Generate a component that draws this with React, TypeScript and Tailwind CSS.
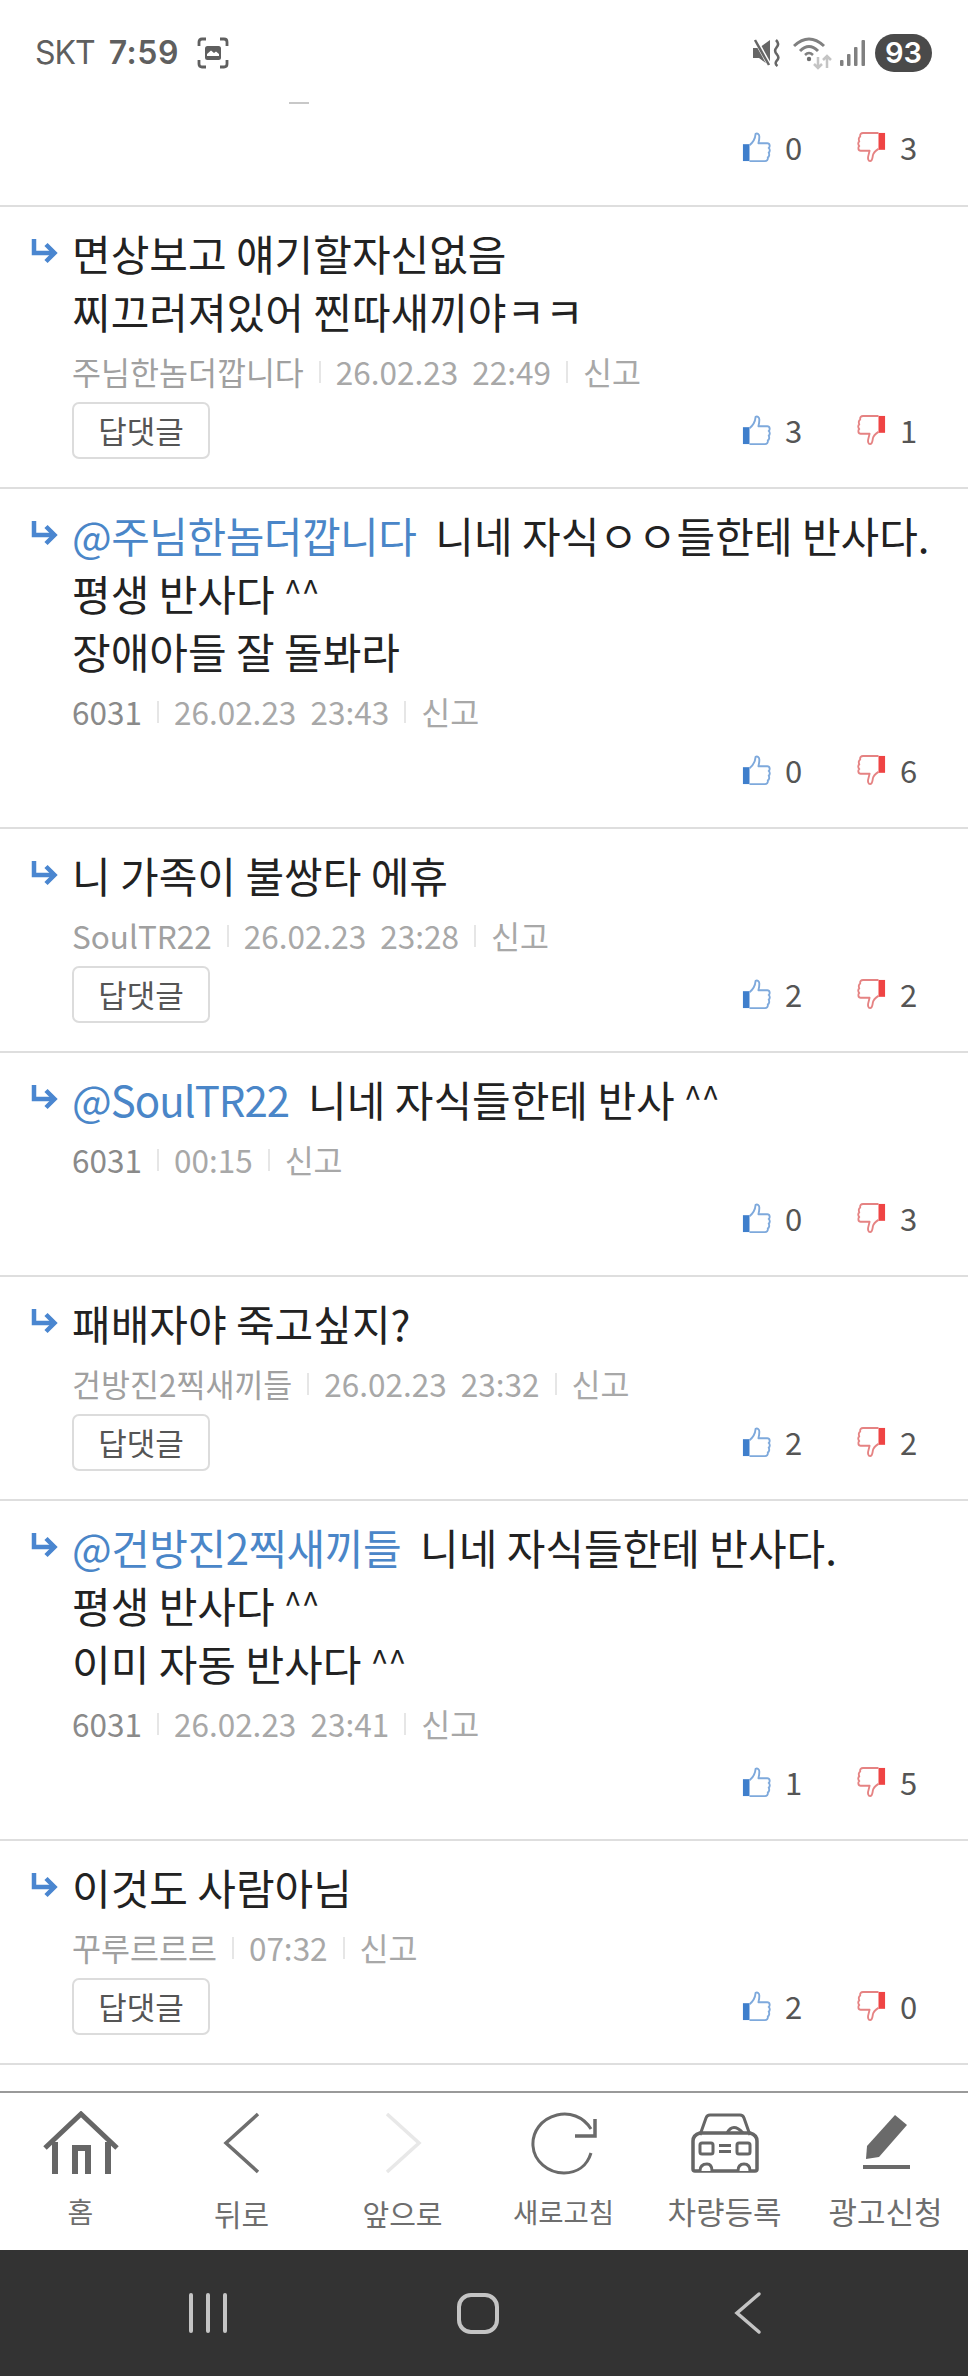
import React from "react";

const Up = () => (
  <svg width="30" height="30" viewBox="0 0 32 32" className="block">
    <rect x="1" y="13" width="7" height="18" fill="#3f7fcc" />
    <path d="M8 14 C12 11 14 8 14.500 2 C16.500 1 18.500 2.500 18.500 5 C18.500 8 18 10 17.500 12 L27 12 C30 12 30 16 28.500 17 C30 18.500 30 21 28.500 22 C29.500 24 29 26.500 27.500 27 C28 29.500 26.500 31 24.500 31 L8 31" fill="none" stroke="#7ea9dc" strokeWidth="2" strokeLinejoin="round" />
  </svg>
);

const Down = () => (
  <svg width="30" height="30" viewBox="0 0 32 32" className="block">
    <rect x="24" y="1" width="7" height="18" fill="#ef4444" />
    <path d="M24 18 C21 20 18.500 22 18 25 C17.500 28 17.500 31 15 31 C13 31 12.500 28 13 26 C13.500 24 14 22 14.500 20 L5 20 C2 20 2 16 3.500 15 C2 13.500 2 11 3.500 10 C2.500 8 3 5.500 4.500 5 C4 2.500 5.500 1 7.500 1 L24 1" fill="none" stroke="#e58383" strokeWidth="2" strokeLinejoin="round" />
  </svg>
);

const Arrow = () => (
  <svg width="28" height="26" viewBox="0 0 28 26" className="block">
    <path d="M4 0 L4 14 L24 14" fill="none" stroke="#4a86d0" strokeWidth="4.500" />
    <path d="M16 5.500 L24.500 14 L16 22.500" fill="none" stroke="#4a86d0" strokeWidth="4.500" />
  </svg>
);

type C = {
  at?: string;
  lines: string[];
  nick: string;
  time: string;
  reply: boolean;
  up: number;
  down: number;
};

const comments: C[] = [
  { lines: ["면상보고 얘기할자신없음", "찌끄러져있어 찐따새끼야ㅋㅋ"], nick: "주님한놈더깝니다", time: "26.02.23  22:49", reply: true, up: 3, down: 1 },
  { at: "@주님한놈더깝니다", lines: ["니네 자식ㅇㅇ들한테 반사다.", "평생 반사다 ^^", "장애아들 잘 돌봐라"], nick: "6031", time: "26.02.23  23:43", reply: false, up: 0, down: 6 },
  { lines: ["니 가족이 불쌍타 에휴"], nick: "SoulTR22", time: "26.02.23  23:28", reply: true, up: 2, down: 2 },
  { at: "@SoulTR22", lines: ["니네 자식들한테 반사 ^^"], nick: "6031", time: "00:15", reply: false, up: 0, down: 3 },
  { lines: ["패배자야 죽고싶지?"], nick: "건방진2찍새끼들", time: "26.02.23  23:32", reply: true, up: 2, down: 2 },
  { at: "@건방진2찍새끼들", lines: ["니네 자식들한테 반사다.", "평생 반사다 ^^", "이미 자동 반사다 ^^"], nick: "6031", time: "26.02.23  23:41", reply: false, up: 1, down: 5 },
  { lines: ["이것도 사람아님"], nick: "꾸루르르르", time: "07:32", reply: true, up: 2, down: 0 },
];

const Votes = ({ up, down }: { up: number; down: number }) => (
  <div className="flex items-center text-[#555555] text-[31px] leading-[40px]">
    <Up />
    <span className="ml-[13px] w-[71px]">{up}</span>
    <Down />
    <span className="ml-[14px] w-[28px]">{down}</span>
  </div>
);

const Sep = () => <span className="mx-[15px] inline-block w-[2px] h-[22px] bg-[#e6e6e6]" />;

const Line = ({ text }: { text: string }) => {
  if (text.endsWith(" ^^")) {
    return (
      <>
        {text.slice(0, -2)}
        <span className="text-[32px] leading-none align-[7px]">^^</span>
      </>
    );
  }
  return <>{text}</>;
};

const Comment = ({ c }: { c: C }) => (
  <div className="border-b-2 border-[#dedede] pt-[17px] pl-[30px] pr-[40px]">
    <div className="flex">
      <div className="w-[42px] pt-[15px] shrink-0">
        <Arrow />
      </div>
      <div className="min-w-0 flex-1">
        <div className="text-[42px] leading-[58px] text-[#222222]">
          {c.lines.map((l, i) => (
            <div key={i} className="whitespace-nowrap">
              {i === 0 && c.at ? (
                <span className={`text-[#4a86c8] mr-[19px] ${c.at === "@SoulTR22" ? "tracking-[-1px]" : "tracking-[-0.5px]"}`}>{c.at}</span>
              ) : null}
              <Line text={l} />
            </div>
          ))}
        </div>
        <div className="mt-[16px] h-[32px] flex items-center text-[31.500px] text-[#a8a8a8] whitespace-nowrap">
          <span className={c.nick === "6031" ? "text-[#8a8a8a]" : "text-[#a0a0a0]"}>{c.nick}</span>
          <Sep />
          <span className="whitespace-pre">{c.time}</span>
          <Sep />
          <span>신고</span>
        </div>
      </div>
    </div>
    <div className="flex items-center justify-between pl-[42px] mt-[14px] mb-[28px] h-[57px]">
      {c.reply ? (
        <div className="w-[138px] h-[57px] border-2 border-[#dcdcdc] rounded-[7px] flex items-center justify-center text-[31px] text-[#555555]">
          답댓글
        </div>
      ) : (
        <div />
      )}
      <div className="mb-[2px]">
        <Votes up={c.up} down={c.down} />
      </div>
    </div>
  </div>
);

const Nav = ({ label, size, children, pb }: { label: string; size: string; children: React.ReactNode; pb?: boolean }) => (
  <div className="w-[161px] flex flex-col items-center">
    <div className="h-[72px] flex items-center justify-center">{children}</div>
    <div className={`${size} leading-[40px] text-[#6e6e6e] whitespace-nowrap ${pb ? "mt-[14px]" : "mt-[12px]"}`}>{label}</div>
  </div>
);

export default function App() {
  return (
    <div
      className="w-[968px] h-[2376px] bg-white flex flex-col overflow-hidden"
      style={{ fontFamily: '"Noto Sans CJK KR", "Noto Sans", Roboto, sans-serif' }}
    >
      {/* status bar */}
      <div className="h-[104px] shrink-0 pt-[32px] pl-[35px] pr-[36px] relative">
        <div className="flex items-center justify-between h-[42px]">
          <div className="flex items-center text-[#5f5f5f] text-[32px] leading-[42px]" style={{ fontFamily: "Inter, sans-serif" }}>
            <span className="tracking-[-1px]">SKT</span>
            <span className="ml-[14px] font-semibold tracking-[0.5px]">7:59</span>
            <svg width="32" height="32" viewBox="0 0 32 32" className="ml-[18px]">
              <path d="M2 9 V5 Q2 2 5 2 H9 M23 2 H27 Q30 2 30 5 V9 M30 23 V27 Q30 30 27 30 H23 M9 30 H5 Q2 30 2 27 V23" fill="none" stroke="#5f5f5f" strokeWidth="2.800" />
              <rect x="8" y="9" width="16" height="14" rx="2.500" fill="#5f5f5f" />
              <path d="M10 17 L14 13.500 L17 16 L19 14.500 L22 17 V19 H10 Z" fill="#ffffff" />
            </svg>
          </div>
          <div className="flex items-center">
            <svg width="28" height="28" viewBox="0 0 28 28">
              <path d="M0 9 H6 L17 1 V27 L6 19 H0 Z" fill="#666666" />
              <path d="M2 0 L17 27" stroke="#ffffff" strokeWidth="4.500" />
              <path d="M2 1 L16 26" stroke="#666666" strokeWidth="2.500" />
              <path d="M23 1 Q27 5 23.500 8.500 Q20.500 12 24 15.500 Q27 19 23.500 22 Q21.500 25 24.500 27" fill="none" stroke="#666666" strokeWidth="2.500" />
            </svg>
            <svg width="40" height="36" viewBox="0 0 40 36" className="ml-[12px]">
              <path d="M1 11 Q16 -3 31 11" fill="none" stroke="#808080" strokeWidth="3" />
              <path d="M7 16 Q16 7 25 16" fill="none" stroke="#808080" strokeWidth="3" />
              <path d="M12 20 Q16 16 20 20" fill="none" stroke="#808080" strokeWidth="2.500" />
              <circle cx="16" cy="24" r="2.200" fill="#707070" />
              <path d="M25 22 V33 M21 29 L25 33 L29 29" fill="none" stroke="#c4c4c4" strokeWidth="2.500" />
              <path d="M34 33 V21 M30 25 L34 21 L38 25" fill="none" stroke="#c4c4c4" strokeWidth="2.500" />
            </svg>
            <svg width="26" height="28" viewBox="0 0 26 28" className="ml-[7px]">
              <rect x="0" y="21" width="3.500" height="6" rx="1" fill="#808080" />
              <rect x="7" y="15" width="3.500" height="12" rx="1" fill="#808080" />
              <rect x="14" y="8" width="3.500" height="19" rx="1" fill="#808080" />
              <rect x="21.500" y="1" width="3.500" height="26" rx="1" fill="#808080" />
            </svg>
            <div className="ml-[9px] w-[57px] h-[38px] rounded-full bg-[#4a4a4a] flex items-center justify-center text-white text-[29px] font-semibold" style={{ fontFamily: "Inter, sans-serif" }}>
              93
            </div>
          </div>
        </div>
        <div className="absolute left-[289px] top-[102px] w-[20px] h-[2px] bg-[#c8c8c8]" />
      </div>

      {/* partial row */}
      <div className="h-[103px] shrink-0 border-b-2 border-[#dedede] pr-[40px] flex items-start justify-end pt-[23px]">
        <Votes up={0} down={3} />
      </div>

      {/* comments */}
      <div className="flex-1 min-h-0 overflow-hidden">
        {comments.map((c, i) => (
          <Comment key={i} c={c} />
        ))}
      </div>

      {/* bottom nav */}
      <div className="h-[159px] shrink-0 border-t-2 border-[#9a9a9a] flex pt-[14px]">
        <Nav label="홈" size="text-[28px]">
          <svg width="76" height="64" viewBox="0 0 76 64">
            <path d="M2 37 L38 3 L74 37" fill="none" stroke="#666666" strokeWidth="5" />
            <path d="M12 31 V63 M65 31 V63" stroke="#666666" strokeWidth="6" fill="none" />
            <path d="M32 63 V37 H45 V63" stroke="#666666" strokeWidth="6" fill="none" />
          </svg>
        </Nav>
        <Nav label="뒤로" size="text-[30px]" pb>
          <svg width="40" height="62" viewBox="0 0 40 62">
            <path d="M36 2 L4 31 L36 60" fill="none" stroke="#6e6e6e" strokeWidth="3.500" />
          </svg>
        </Nav>
        <Nav label="앞으로" size="text-[29px]" pb>
          <svg width="40" height="62" viewBox="0 0 40 62">
            <path d="M4 2 L36 31 L4 60" fill="none" stroke="#e8e8e8" strokeWidth="3.500" />
          </svg>
        </Nav>
        <Nav label="새로고침" size="text-[27.500px]">
          <svg width="66" height="64" viewBox="0 0 66 64">
            <path d="M60 18 C52 5 38 1 26 4 C10 8 1 21 2 35 C3 50 17 62 33 62 C46 62 56 55 60 42" fill="none" stroke="#6a6a6a" strokeWidth="3" />
            <path d="M64 8 V25 H44" fill="none" stroke="#6a6a6a" strokeWidth="3.500" />
          </svg>
        </Nav>
        <Nav label="차량등록" size="text-[31px]">
          <svg width="68" height="60" viewBox="0 0 68 60">
            <path d="M9 22 L15 5 Q16 2 19 2 H49 Q52 2 53 5 L59 22" fill="none" stroke="#666666" strokeWidth="3" />
            <path d="M36 20 Q42 9 52 20" fill="none" stroke="#666666" strokeWidth="3" />
            <path d="M9 20 H59 Q66 22 66 28 V56 Q66 58 64 58 H4 Q2 58 2 56 V28 Q2 22 9 20 Z" fill="none" stroke="#666666" strokeWidth="3.500" />
            <rect x="9" y="30" width="13" height="11" rx="2" fill="none" stroke="#666666" strokeWidth="3" />
            <rect x="46" y="30" width="13" height="11" rx="2" fill="none" stroke="#666666" strokeWidth="3" />
            <rect x="28" y="31" width="12" height="3" fill="#666666" />
            <rect x="28" y="37" width="12" height="3" fill="#666666" />
            <path d="M9 58 Q9 51 16 51 Q21 51 21 58 M47 58 Q47 51 53 51 Q59 51 59 58" fill="#ffffff" stroke="#666666" strokeWidth="3" />
          </svg>
        </Nav>
        <Nav label="광고신청" size="text-[31px]">
          <svg width="50" height="58" viewBox="0 0 50 58" className="ml-[2px]">
            <path d="M33 1 L45 11 L17 43 L4 45 L5 32 Z" fill="#6a6a6a" />
            <rect x="1" y="51" width="47" height="4" fill="#6a6a6a" />
          </svg>
        </Nav>
      </div>

      {/* android nav */}
      <div className="h-[126px] shrink-0 bg-[#333333] flex items-center relative">
        <div className="w-[968px] flex items-center h-[44px]">
          <div className="ml-[189px] flex gap-[13px]">
            <div className="w-[4px] h-[40px] rounded-full bg-[#c4c4c4]" />
            <div className="w-[4px] h-[40px] rounded-full bg-[#c4c4c4]" />
            <div className="w-[4px] h-[40px] rounded-full bg-[#c4c4c4]" />
          </div>
          <div className="ml-[230px] w-[42px] h-[41px] rounded-[14px] border-[4px] border-[#c4c4c4]" />
          <svg width="30" height="44" viewBox="0 0 30 44" className="ml-[234px]">
            <path d="M26 3 L4 22 L26 41" fill="none" stroke="#c4c4c4" strokeWidth="3.500" strokeLinecap="round" />
          </svg>
        </div>
      </div>
    </div>
  );
}
